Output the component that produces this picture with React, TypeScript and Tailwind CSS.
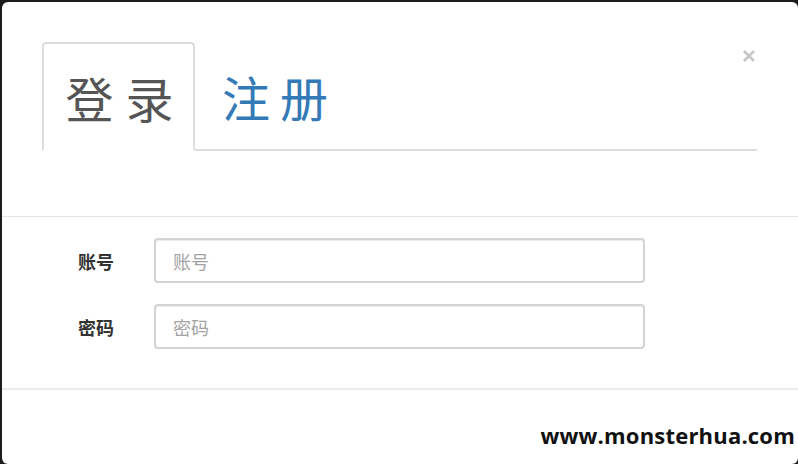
import React from "react";

const cjk = "font-['Noto_Sans_CJK_SC','Noto_Sans',sans-serif]";

function Field({ label }: { label: string }) {
  return (
    <div className="flex items-center h-[45px]">
      <label className={`w-[36px] text-[18px] font-bold text-[#333] leading-none ${cjk}`}>
        {label}
      </label>
      <input
        className={`ml-[40px] w-[491px] h-[45px] rounded-[4px] border-2 border-[#d4d4d4] shadow-[inset_0_1px_1px_rgba(0,0,0,0.075)] px-[17px] text-[18px] text-[#555] placeholder:text-[#a3a3a3] outline-none ${cjk}`}
        placeholder={label}
        type={label === "密码" ? "password" : "text"}
      />
    </div>
  );
}

export default function App() {
  return (
    <div className="w-[798px] h-[464px] bg-[#1c1c1c] pt-[2px] pl-[2px] overflow-hidden">
      <div className="w-[796px] h-[462px] bg-white rounded-[6px] flex flex-col">
        {/* header with tabs */}
        <div className="relative h-[215px] border-b border-[#e5e5e5] pt-[40px] pl-[40px] pr-[41px]">
          <div className="flex border-b-2 border-[#dddddd]">
            <div
              className={`-mb-[2px] w-[153px] h-[109px] flex items-center justify-center rounded-t-[4px] border-2 border-[#dddddd] border-b-white bg-white text-[48px] tracking-[12px] pl-[14px] text-[#555] ${cjk}`}
            >
              登录
            </div>
            <div
              className={`h-[107px] flex items-center pl-[27px] text-[48px] tracking-[10px] text-[#337ab7] ${cjk}`}
            >
              注册
            </div>
          </div>
          <button className="absolute left-[740px] top-[47px] w-[14px] h-[14px] flex items-center justify-center">
            <svg width="14" height="14" viewBox="0 0 14 14">
              <path d="M2 2L12 12M12 2L2 12" stroke="#c6c6c6" strokeWidth="2.6" />
            </svg>
          </button>
        </div>

        {/* form */}
        <div className="h-[173px] border-b-2 border-[#ececec] pt-[21px] pl-[76px] flex flex-col gap-[21px]">
          <Field label="账号" />
          <Field label="密码" />
        </div>

        {/* footer */}
        <div className="flex-1 flex items-center justify-end pr-[3px] pt-[16px]">
          <span className="font-['Open_Sans',sans-serif] font-bold text-[22px] tracking-[0.2px] text-[#111]">
            www.monsterhua.com
          </span>
        </div>
      </div>
    </div>
  );
}
